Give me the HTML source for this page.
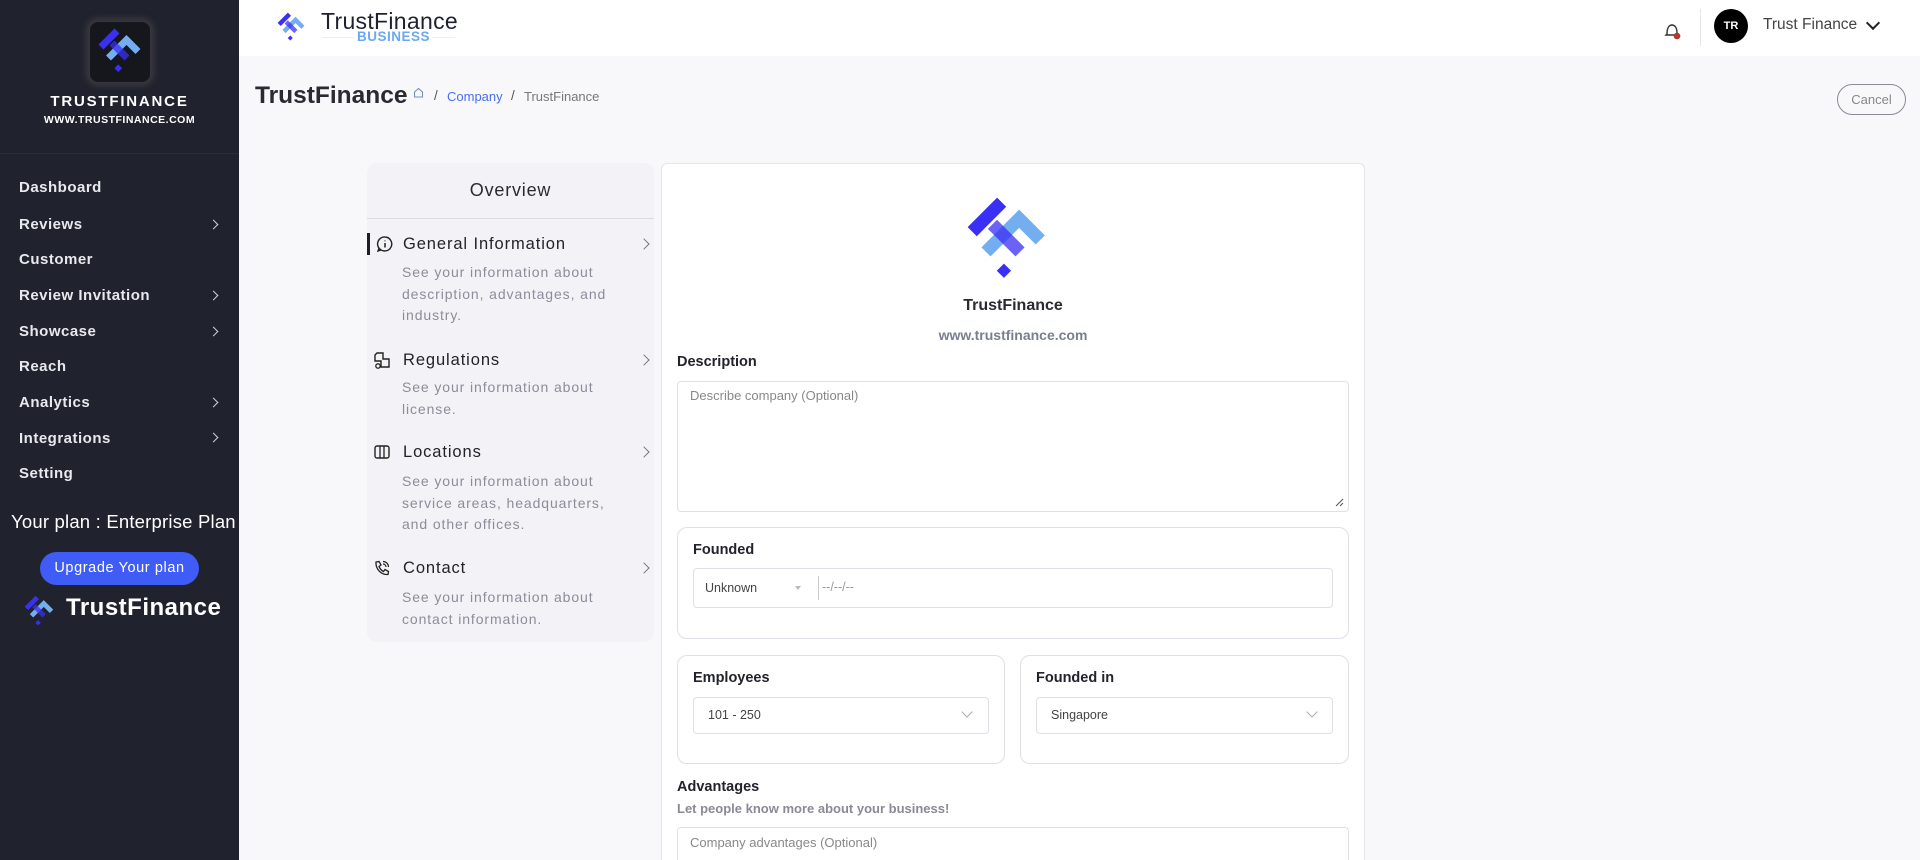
<!DOCTYPE html>
<html style="width:1920px;height:860px;overflow:hidden"><head><meta charset="utf-8">
<style>
*{box-sizing:border-box;margin:0;padding:0}
body{width:1920px;height:860px;overflow:hidden;font-family:"Liberation Sans",sans-serif;background:#f8f8fa;position:relative;color:#1f2130}
.abs{position:absolute}
#side{left:0;top:0;width:239px;height:860px;background:#20232d}
.mi{position:absolute;left:19px;color:#e8e9ee;font-weight:bold;font-size:15px;letter-spacing:.5px}
.ch{position:absolute;left:210px;width:7px;height:7px;border-right:1.6px solid #cfd1d8;border-top:1.6px solid #cfd1d8;transform:rotate(45deg)}
#head{left:239px;top:0;width:1681px;height:56px;background:#fff}
.lp{left:367px;top:163px;width:287px;height:479px;background:#f3f3f7;border-radius:10px}
.it{position:absolute;left:403px;font-size:16.5px;letter-spacing:.9px;color:#22232b}
.ds{position:absolute;left:402px;font-size:14px;letter-spacing:.9px;color:#8c8c9a;line-height:21.5px;white-space:nowrap}
.rc{position:absolute;left:640px;width:8px;height:8px;border-right:1.6px solid #777;border-top:1.6px solid #777;transform:rotate(45deg)}
.rp{left:661px;top:163px;width:704px;height:720px;background:#fff;border:1px solid #e4e4ea;border-radius:6px}
.lbl{position:absolute;font-size:14.5px;font-weight:bold;color:#22232b}
.box{position:absolute;border:1.5px solid #dfdfe8;border-radius:10px;background:#fff}
.inp{position:absolute;border:1.5px solid #dfdfe8;border-radius:4px;background:#fff}
.sel{position:absolute;font-size:12.5px;color:#444}
.dch{position:absolute;width:8px;height:8px;border-right:1.5px solid #aaa;border-bottom:1.5px solid #aaa;transform:rotate(45deg)}
</style></head><body>
<svg width="0" height="0" style="position:absolute">
<defs>
<symbol id="lg" viewBox="8 0 100 100">
<line x1="50" y1="10" x2="18" y2="42" stroke="#3a2ff5" stroke-width="14"/>
<polyline points="33,64 69,28 92,51" fill="none" stroke="#72aef0" stroke-width="14"/>
<line x1="40" y1="34" x2="70" y2="64" stroke="#3a2ff5" stroke-width="14" opacity=".75"/>
<rect x="47" y="79" width="11" height="11" fill="#3a2ff5" transform="rotate(45 52.5 84.5)"/>
</symbol>
</defs></svg>

<div id="side" class="abs">
  <div class="abs" style="left:90px;top:22px;width:60px;height:60px;background:#15171d;border-radius:8px;box-shadow:0 0 6px 4px #3a3840"></div>
  <svg class="abs" style="left:96px;top:26px" width="50" height="50"><use href="#lg"/></svg>
  <div class="abs" style="left:0;width:239px;top:93px;text-align:center;color:#fff;font-weight:bold;font-size:15px;letter-spacing:1.8px">TRUSTFINANCE</div>
  <div class="abs" style="left:0;width:239px;top:114px;text-align:center;color:#fff;font-weight:bold;font-size:10.5px;letter-spacing:.5px">WWW.TRUSTFINANCE.COM</div>
  <div class="abs" style="left:0;top:153px;width:239px;height:1px;background:#2b2e38"></div>
  <div class="mi" style="top:179px">Dashboard</div>
  <div class="mi" style="top:216px">Reviews</div><div class="ch" style="top:221px"></div>
  <div class="mi" style="top:251px">Customer</div>
  <div class="mi" style="top:287px">Review Invitation</div><div class="ch" style="top:292px"></div>
  <div class="mi" style="top:323px">Showcase</div><div class="ch" style="top:328px"></div>
  <div class="mi" style="top:358px">Reach</div>
  <div class="mi" style="top:394px">Analytics</div><div class="ch" style="top:399px"></div>
  <div class="mi" style="top:430px">Integrations</div><div class="ch" style="top:434px"></div>
  <div class="mi" style="top:465px">Setting</div>
  <div class="abs" style="left:11px;top:511px;color:#fff;font-size:18.5px;letter-spacing:.2px">Your plan : Enterprise Plan</div>
  <div class="abs" style="left:40px;top:552px;width:159px;height:33px;background:#3f5cf6;border-radius:17px;color:#fff;font-size:14.5px;text-align:center;line-height:33px;letter-spacing:.6px">Upgrade Your plan</div>
  <svg class="abs" style="left:23px;top:594px" width="34" height="34"><use href="#lg"/></svg>
  <div class="abs" style="left:66px;top:594px;color:#fff;font-weight:bold;font-size:24px;letter-spacing:.5px">TrustFinance</div>
</div>

<div id="head" class="abs">
  <svg class="abs" style="left:37px;top:11px" width="32" height="32"><use href="#lg"/></svg>
  <div class="abs" style="left:82px;top:8px;font-size:23px;color:#1f2130;letter-spacing:.3px">TrustFinance</div>
  <div class="abs" style="left:83px;top:37px;width:133px;height:1px;background:#eee"></div>
  <div class="abs" style="left:116px;top:29px;font-size:13.5px;font-weight:bold;color:#6ba8f0;letter-spacing:.5px;background:#fff;padding:0 2px">BUSINESS</div>
  <svg class="abs" style="left:1424px;top:21px" width="20" height="20" viewBox="0 0 20 20"><path d="M4 13 C4 7 6 4 9 4 C12 4 14 7 14 12 L16 14 L3 14 Z" fill="none" stroke="#333" stroke-width="1.4"/><circle cx="14" cy="15" r="3.3" fill="#b33a2a"/></svg>
  <div class="abs" style="left:1461px;top:9px;width:1px;height:37px;background:#e5e5ea"></div>
  <div class="abs" style="left:1475px;top:9px;width:34px;height:34px;border-radius:50%;background:#000;color:#fff;font-size:11px;font-weight:bold;text-align:center;line-height:34px">TR</div>
  <div class="abs" style="left:1524px;top:16px;font-size:15.5px;color:#444">Trust Finance</div>
  <div class="abs" style="left:1629px;top:18px;width:10px;height:10px;border-right:2px solid #222;border-bottom:2px solid #222;transform:rotate(45deg)"></div>
</div>

<div class="abs" style="left:255px;top:82px;font-size:24.5px;font-weight:bold;color:#2a2a30">TrustFinance</div>
<svg class="abs" style="left:413px;top:87px" width="11" height="11" viewBox="0 0 11 11"><path d="M1.5 10V5L5.5 1.5 9.5 5V10Z" fill="none" stroke="#7a8fb8" stroke-width="1.1"/></svg>
<div class="abs" style="left:434px;top:88px;font-size:13.5px;color:#555">/</div>
<div class="abs" style="left:447px;top:89px;font-size:13px;color:#4a6cf0">Company</div>
<div class="abs" style="left:511px;top:88px;font-size:13.5px;color:#555">/</div>
<div class="abs" style="left:524px;top:89px;font-size:13px;color:#777">TrustFinance</div>
<div class="abs" style="left:1837px;top:84px;width:69px;height:31px;border:1.3px solid #8a8a98;border-radius:16px;text-align:center;line-height:29px;font-size:13px;color:#888">Cancel</div>

<div class="abs lp">
  <div class="abs" style="left:0;width:287px;top:17px;text-align:center;font-size:18px;color:#2a2a30;letter-spacing:.8px">Overview</div>
  <div class="abs" style="left:0;top:55px;width:287px;height:1px;background:#dcdce6"></div>
</div>
<div class="abs" style="left:367px;top:233px;width:3px;height:22px;background:#1e1f25"></div>
<svg class="abs" style="left:376px;top:235px" width="18" height="18" viewBox="0 0 18 18"><path d="M9 2A7 7 0 1 1 3 13L2 16 5 15A7 7 0 0 1 9 2Z" fill="none" stroke="#222" stroke-width="1.4"/><path d="M9 8V12.5M9 5.5V6.3" stroke="#222" stroke-width="1.5"/></svg>
<div class="it" style="top:235px">General Information</div><div class="rc" style="top:240px"></div>
<div class="ds" style="top:262px">See your information about<br>description, advantages, and<br>industry.</div>
<svg class="abs" style="left:372px;top:350px" width="20" height="20" viewBox="0 0 20 20"><path d="M5 3H11V9H17V17H9V11H3V5Z" fill="none" stroke="#222" stroke-width="1.4"/><circle cx="6" cy="16" r="2.2" fill="none" stroke="#222" stroke-width="1.3"/></svg>
<div class="it" style="top:351px">Regulations</div><div class="rc" style="top:356px"></div>
<div class="ds" style="top:377px">See your information about<br>license.</div>
<svg class="abs" style="left:373px;top:443px" width="18" height="18" viewBox="0 0 18 18"><rect x="2" y="3" width="14" height="12" rx="2" fill="none" stroke="#222" stroke-width="1.4"/><path d="M7 3V15M11 3V15" stroke="#222" stroke-width="1.3"/></svg>
<div class="it" style="top:443px">Locations</div><div class="rc" style="top:448px"></div>
<div class="ds" style="top:471px">See your information about<br>service areas, headquarters,<br>and other offices.</div>
<svg class="abs" style="left:373px;top:559px" width="18" height="18" viewBox="0 0 18 18"><path d="M3 3L6 2.5 8 6 6 7.5C7 10 8.5 11.5 10.5 12.5L12 10.5 15.5 12.5 15 15.5C8 16 2.5 10 3 3Z" fill="none" stroke="#222" stroke-width="1.3"/><path d="M10 2.5A5.5 5.5 0 0 1 15.5 8M10 5A3 3 0 0 1 13 8" fill="none" stroke="#222" stroke-width="1.2"/></svg>
<div class="it" style="top:559px">Contact</div><div class="rc" style="top:564px"></div>
<div class="ds" style="top:587px">See your information about<br>contact information.</div>

<div class="abs rp" style="height:720px"></div>
<svg class="abs" style="left:963px;top:193px" width="92" height="92"><use href="#lg"/></svg>
<div class="abs" style="left:661px;width:704px;top:297px;text-align:center;font-size:16px;font-weight:bold;color:#2a2a30">TrustFinance</div>
<div class="abs" style="left:661px;width:704px;top:327px;text-align:center;font-size:14px;font-weight:bold;color:#7a7f8f">www.trustfinance.com</div>
<div class="lbl" style="left:677px;top:354px">Description</div>
<div class="inp" style="left:677px;top:381px;width:672px;height:131px"></div>
<div class="abs" style="left:690px;top:388px;font-size:13px;color:#888">Describe company (Optional)</div>
<svg class="abs" style="left:1335px;top:498px" width="9" height="9"><path d="M1 8L8 1M5 8L8 5" stroke="#555" stroke-width="1"/></svg>

<div class="box" style="left:677px;top:527px;width:672px;height:112px"></div>
<div class="lbl" style="left:693px;top:542px">Founded</div>
<div class="inp" style="left:693px;top:568px;width:640px;height:40px"></div>
<div class="sel" style="left:705px;top:581px">Unknown</div>
<div class="abs" style="left:795px;top:586px;border:3px solid transparent;border-top:4px solid #bbb"></div>
<div class="abs" style="left:818px;top:576px;width:1px;height:24px;background:#ccc"></div>
<div class="sel" style="left:822px;top:580px;color:#999">--/--/--</div>

<div class="box" style="left:677px;top:655px;width:328px;height:109px"></div>
<div class="lbl" style="left:693px;top:670px">Employees</div>
<div class="inp" style="left:693px;top:697px;width:296px;height:37px"></div>
<div class="sel" style="left:708px;top:708px">101 - 250</div>
<div class="dch" style="left:963px;top:708px"></div>
<div class="box" style="left:1020px;top:655px;width:329px;height:109px"></div>
<div class="lbl" style="left:1036px;top:670px">Founded in</div>
<div class="inp" style="left:1036px;top:697px;width:297px;height:37px"></div>
<div class="sel" style="left:1051px;top:708px">Singapore</div>
<div class="dch" style="left:1308px;top:708px"></div>

<div class="lbl" style="left:677px;top:779px">Advantages</div>
<div class="abs" style="left:677px;top:801px;font-size:13px;font-weight:bold;color:#8a8a96">Let people know more about your business!</div>
<div class="inp" style="left:677px;top:827px;width:672px;height:60px"></div>
<div class="abs" style="left:690px;top:835px;font-size:13px;color:#888">Company advantages (Optional)</div>
</body></html>
